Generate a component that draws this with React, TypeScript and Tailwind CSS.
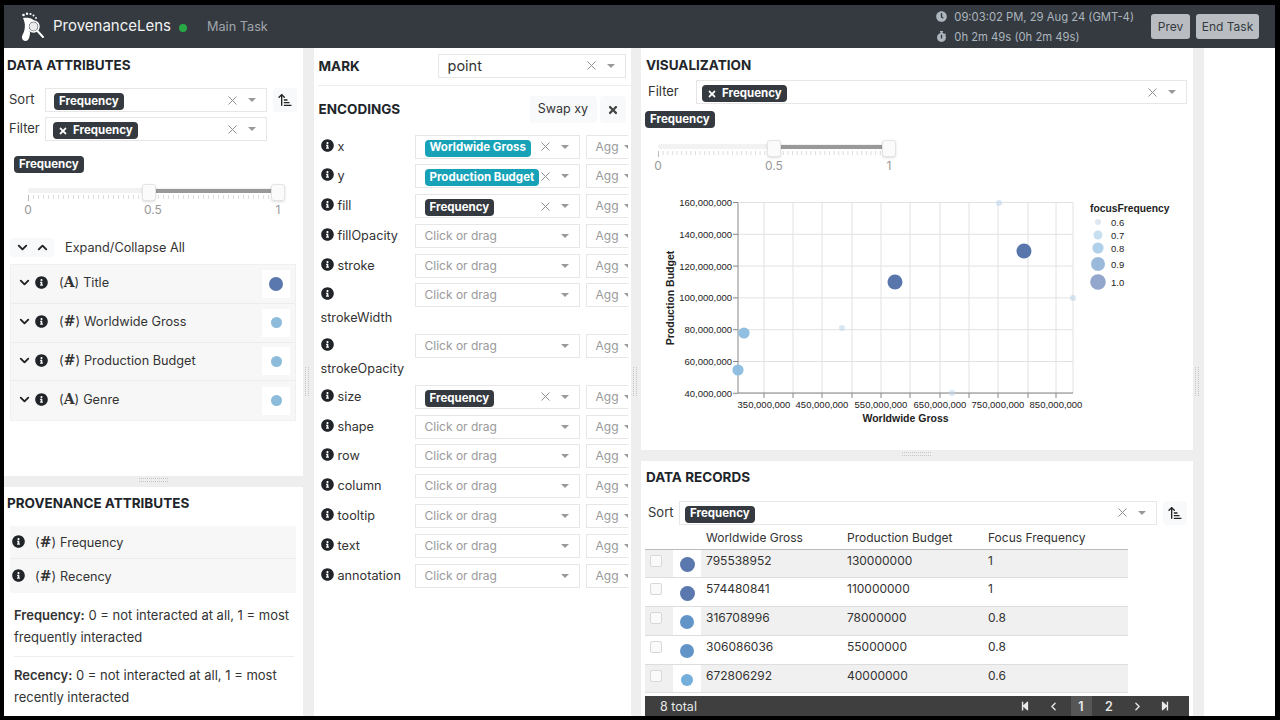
import { ArrowUpNarrowWide, ChevronDown, ChevronLeft, ChevronRight, ChevronUp, X } from "lucide-react";
import type { ReactNode } from "react";
import { FaClock, FaInfoCircle, FaStepBackward, FaStepForward, FaStopwatch, FaTimes } from "react-icons/fa";

const font = "font-['Inter','Noto_Sans',sans-serif]";

function Logo() {
  return (
    <svg width="24" height="30" viewBox="0 0 24 30" fill="white">
      <circle cx="2.5" cy="3" r="1.3" />
      <circle cx="6" cy="1.8" r="1.2" />
      <circle cx="9.5" cy="2" r="1.1" />
      <circle cx="12.5" cy="3.5" r="1" />
      <circle cx="15" cy="6" r="0.9" />
      <path d="M2 6 C6 5 12 6 13 9 C9 9 7 12 7.5 16 C7.5 18 8 19 9 20 C9 24 8 29 4.5 29 C1 29 0 25 2 22 C4 18 5 12 2 6 Z" />
      <circle cx="12.5" cy="14.5" r="5.5" fill="none" stroke="white" strokeWidth="1.5" />
      <circle cx="12.5" cy="14.5" r="4.2" fill="white" fillOpacity="0.9" />
      <path d="M16.5 19 L22 25" stroke="white" strokeWidth="2" strokeLinecap="round" />
    </svg>
  );
}

function Pill({ children, removable, teal, inBox }: { children: ReactNode; removable?: boolean; teal?: boolean; inBox?: boolean }) {
  return (
    <span
      className={`inline-flex h-[17px] items-center gap-[5px] rounded-[4px] px-[5px] text-[11.5px] leading-none font-bold whitespace-nowrap text-white ${
        teal ? "bg-[#17a2b8]" : "bg-[#343a40]"
      } ${inBox ? "mt-[3px]" : ""}`}
    >
      {removable && <FaTimes size={10} />}
      {children}
    </span>
  );
}

function Caret({ className = "" }: { className?: string }) {
  return <span className={`h-0 w-0 border-x-[4.5px] border-t-[4.5px] border-x-transparent border-t-[#999] ${className}`} />;
}

function SelectBox({
  children,
  width,
  clear = true,
  pad = "pl-[9px]",
}: {
  children: ReactNode;
  width: string;
  clear?: boolean;
  pad?: string;
}) {
  return (
    <div className={`flex h-6 shrink-0 items-center border border-[#e6e6e6] bg-white pr-[10px] ${width}`}>
      <div className={`flex min-w-0 flex-1 items-center ${pad}`}>{children}</div>
      {clear && <X size={15} strokeWidth={1.5} className="mr-[8px] shrink-0 text-[#8a8a8a]" />}
      <Caret />
    </div>
  );
}

function Slider({ low, mid, end }: { low: number; mid: number; end: number }) {
  return (
    <div className="relative h-[36px]" style={{ width: end + 10 }}>
      <div className="absolute top-[5px] left-0 h-[5px] rounded-full bg-[#f2f2f2]" style={{ width: end }} />
      <div className="absolute top-[6px] h-[4px] bg-[#999]" style={{ left: low, width: end - low }} />
      <svg className="absolute top-[11px] left-0" width={end + 2} height="8">
        {Array.from({ length: 51 }, (_, i) => {
          const x = 0.5 + (i * end) / 50;
          const major = i === 0 || i === 25 || i === 50;
          return <line key={i} x1={x} x2={x} y1="1" y2={major ? 7 : 5} stroke={major ? "#bbb" : "#ddd"} />;
        })}
      </svg>
      <span className="absolute top-[1px] h-[17px] w-[14px] -translate-x-1/2 rounded-[3px] border border-[#e4e4e4] bg-[#fbfbfb] shadow-sm" style={{ left: low }} />
      <span className="absolute top-[1px] h-[17px] w-[14px] -translate-x-1/2 rounded-[3px] border border-[#e4e4e4] bg-[#fbfbfb] shadow-sm" style={{ left: end }} />
      <span className="absolute top-[18px] -translate-x-1/2 text-[12px] text-[#999]" style={{ left: 0 }}>0</span>
      <span className="absolute top-[18px] -translate-x-1/2 text-[12px] text-[#999]" style={{ left: mid }}>0.5</span>
      <span className="absolute top-[18px] -translate-x-1/2 text-[12px] text-[#999]" style={{ left: end }}>1</span>
    </div>
  );
}

function TypeMark({ kind }: { kind: "A" | "#" }) {
  return (
    <span>
      (<span className="font-['DejaVu_Serif',serif] text-[14px] font-bold">{kind}</span>)
    </span>
  );
}

const attributes: { kind: "A" | "#"; name: string; dot: string }[] = [
  { kind: "A", name: "Title", dot: "h-[14px] w-[14px] bg-[#5b78ae]" },
  { kind: "#", name: "Worldwide Gross", dot: "h-[11px] w-[11px] bg-[#8dbbdc]" },
  { kind: "#", name: "Production Budget", dot: "h-[11px] w-[11px] bg-[#8dbbdc]" },
  { kind: "A", name: "Genre", dot: "h-[11px] w-[11px] bg-[#8dbbdc]" },
];

function DataAttributes() {
  return (
    <section className="h-[428px] shrink-0 bg-white pt-[8px]">
      <h2 className="pl-[3px] text-[13.5px] leading-[18px] font-bold text-[#212529]">DATA ATTRIBUTES</h2>
      <div className="mt-[14px] flex h-6 items-center pl-[5px] text-[13px] text-[#333]">
        <span className="w-[36px]">Sort</span>
        <SelectBox width="w-[222px]" pad="pl-[8px]">
          <Pill inBox>Frequency</Pill>
        </SelectBox>
        <span className="ml-[6px] flex h-6 w-6 items-center justify-center rounded bg-[#f8f9fa]">
          <ArrowUpNarrowWide size={16} strokeWidth={2} className="text-[#222]" />
        </span>
      </div>
      <div className="mt-[5px] flex h-6 items-center pl-[5px] text-[13px] text-[#333]">
        <span className="w-[36px]">Filter</span>
        <SelectBox width="w-[222px]" pad="pl-[7px]">
          <Pill removable inBox>Frequency</Pill>
        </SelectBox>
      </div>
      <div className="mt-[9px] pl-[10px]"><Pill>Frequency</Pill></div>
      <div className="mt-[9px] pl-[24px]"><Slider low={121} mid={125} end={250} /></div>
      <div className="mt-[19px] flex h-[19px] items-center pl-[6px]">
        <span className="flex h-[19px] w-[44px] items-center justify-center gap-[5px] rounded bg-[#f8f9fa]">
          <ChevronDown size={15} strokeWidth={3} className="text-[#222]" />
          <ChevronUp size={15} strokeWidth={3} className="text-[#222]" />
        </span>
        <span className="ml-[11px] text-[12.7px] text-[#333]">Expand/Collapse All</span>
      </div>
      <ul className="mt-[7px] ml-[6px] w-[286px] border border-[#f0f0f0] bg-[#f7f7f7]">
        {attributes.map((a) => (
          <li key={a.name} className="flex h-[38.8px] items-center border-b border-[#ececec] pr-[5px] pl-[6px] text-[12.7px] text-[#333] last:border-b-0">
            <span className="flex flex-1 items-center pb-[2px]">
              <ChevronDown size={15} strokeWidth={3} className="shrink-0 text-[#222]" />
              <FaInfoCircle size={13} className="ml-[3px] shrink-0 text-[#212529]" />
              <span className="ml-[11px] flex items-center gap-[4px]"><TypeMark kind={a.kind} /> {a.name}</span>
            </span>
            <span className="flex h-[28px] w-[28px] items-center justify-center bg-white">
              <span className={`rounded-full ${a.dot}`} />
            </span>
          </li>
        ))}
      </ul>
    </section>
  );
}

function ProvenanceAttributes() {
  return (
    <section className="flex-1 overflow-hidden bg-white pt-[7px]">
      <h2 className="pl-[3px] text-[13.5px] leading-[18px] font-bold text-[#212529]">PROVENANCE ATTRIBUTES</h2>
      <ul className="mt-[14px] ml-[6px] w-[286px] bg-[#f7f7f7] text-[12.7px] text-[#333]">
        {["Frequency", "Recency"].map((n) => (
          <li key={n} className="flex h-[33.5px] items-center border-b border-[#ececec] pl-[2px] last:border-b-0">
            <FaInfoCircle size={13} className="shrink-0 text-[#212529]" />
            <span className="ml-[10px] flex items-center gap-[4px] pt-[2px]"><TypeMark kind="#" /> {n}</span>
          </li>
        ))}
      </ul>
      <div className="mt-[11px] px-[10px] text-[13px] leading-[22.5px] text-[#333]">
        <p><b className="font-semibold">Frequency:</b> 0 = not interacted at all, 1 = most frequently interacted</p>
        <hr className="my-[7px] w-[280px] border-[#eeeeee]" />
        <p><b className="font-semibold">Recency:</b> 0 = not interacted at all, 1 = most recently interacted</p>
      </div>
    </section>
  );
}

const encodings: { name: string; pill?: string; teal?: boolean; wrap?: boolean }[] = [
  { name: "x", pill: "Worldwide Gross", teal: true },
  { name: "y", pill: "Production Budget", teal: true },
  { name: "fill", pill: "Frequency" },
  { name: "fillOpacity" },
  { name: "stroke" },
  { name: "strokeWidth", wrap: true },
  { name: "strokeOpacity", wrap: true },
  { name: "size", pill: "Frequency" },
  { name: "shape" },
  { name: "row" },
  { name: "column" },
  { name: "tooltip" },
  { name: "text" },
  { name: "annotation" },
];

function EncodingRow({ e }: { e: (typeof encodings)[number] }) {
  return (
    <div className={`flex items-start ${e.wrap ? "h-[50.7px]" : "h-[29.8px]"}`}>
      <div className="w-[94px] shrink-0 text-[12.7px] leading-[24px] text-[#333]">
        <FaInfoCircle size={13} className="mr-[4px] inline-block align-[-1px] text-[#212529]" />
        {e.wrap ? <span className="block leading-[22px]">{e.name}</span> : e.name}
      </div>
      <SelectBox width="w-[165px]" clear={!!e.pill}>
        {e.pill ? <Pill teal={e.teal} inBox>{e.pill}</Pill> : <span className="text-[12px] text-[#9a9a9a]">Click or drag</span>}
      </SelectBox>
      <div className="ml-[6px] flex h-6 w-[60px] shrink-0 items-center border border-[#e6e6e6] pl-[9px] text-[12px] text-[#9a9a9a]">
        Agg
        <Caret className="ml-[5px]" />
      </div>
    </div>
  );
}

function EncodingPanel() {
  return (
    <section className="h-full overflow-hidden bg-white pt-[4px] pl-[4px]">
      <div className="flex h-[34px] items-center border-b border-[#eeeeee] pb-[6px]">
        <h2 className="mt-[2px] w-[120px] pl-[1px] text-[13.5px] font-bold text-[#212529]">MARK</h2>
        <SelectBox width="w-[188px]">
          <span className="text-[14.5px] text-[#333]">point</span>
        </SelectBox>
      </div>
      <div className="mt-[10px] flex h-[27px] items-center">
        <h2 className="flex-1 pl-[1px] text-[13.5px] font-bold text-[#212529]">ENCODINGS</h2>
        <span className="flex h-[27px] w-[67px] items-center justify-center rounded bg-[#f8f9fa] text-[12.5px] text-[#333]">Swap xy</span>
        <span className="mr-[5px] ml-[3px] flex h-[27px] w-[26px] items-center justify-center rounded bg-[#f8f9fa] text-[#444]">
          <FaTimes size={12} />
        </span>
      </div>
      <div className="mt-[11.5px] w-[310px] overflow-hidden pl-[3px]">
        {encodings.map((e) => (
          <EncodingRow key={e.name} e={e} />
        ))}
      </div>
    </section>
  );
}

const xTicks = [
  [764, "350,000,000"], [793], [822, "450,000,000"], [852], [881, "550,000,000"], [910],
  [940, "650,000,000"], [969], [998, "750,000,000"], [1028], [1056, "850,000,000"],
] as [number, string?][];
const yTicks = [
  [202.5, "160,000,000"], [234.3, "140,000,000"], [266.1, "120,000,000"], [297.9, "100,000,000"],
  [329.7, "80,000,000"], [361.5, "60,000,000"], [393.3, "40,000,000"],
] as [number, string][];
const points = [
  [999, 203, 3, "#b9d3ea", 0.55], [1024, 251, 7.5, "#4f6fa8", 0.95], [895, 282, 7.5, "#4f6fa8", 0.95],
  [1073, 298, 3, "#b9d3ea", 0.55], [842, 328, 3, "#b9d3ea", 0.55], [744, 333, 5.6, "#8abcdf", 0.95],
  [738, 370, 5.6, "#8abcdf", 0.95], [952, 393, 3, "#b9d3ea", 0.55],
] as [number, number, number, string, number][];
const legend = [
  [222, 3, "#dfe8f2", "0.6"], [235, 4.5, "#c8dff0", "0.7"], [248, 5.6, "#aed0ea", "0.8"], [264, 7, "#9bbadb", "0.9"], [282, 7.8, "#93a6cb", "1.0"],
] as [number, number, string, string][];

function Chart() {
  return (
    <svg width="552" height="250" viewBox="641 190 552 250" className="block font-['Liberation_Sans',sans-serif]">
      {yTicks.map(([y, label]) => (
        <g key={label}>
          <line x1="738" x2="1073" y1={y} y2={y} stroke="#e2e2e2" />
          <line x1="733" x2="738" y1={y} y2={y} stroke="#888" />
          <text x="732" y={y + 3.5} textAnchor="end" fontSize="9.5" fill="#222">{label}</text>
        </g>
      ))}
      {xTicks.map(([x, label]) => (
        <g key={x}>
          <line x1={x} x2={x} y1="203" y2="393" stroke="#e2e2e2" />
          <line x1={x} x2={x} y1="393" y2="398" stroke="#888" />
          {label && <text x={x} y="408" textAnchor="middle" fontSize="9.5" fill="#222">{label}</text>}
        </g>
      ))}
      <line x1="1073" x2="1073" y1="203" y2="393" stroke="#e2e2e2" />
      <line x1="738" x2="738" y1="203" y2="393" stroke="#888" />
      <line x1="738" x2="1073" y1="393" y2="393" stroke="#888" />
      {points.map(([x, y, r, fill, op]) => (
        <circle key={x} cx={x} cy={y} r={r} fill={fill} fillOpacity={op} />
      ))}
      <text x="905.5" y="422" textAnchor="middle" fontSize="10.5" fontWeight="700" fill="#222">Worldwide Gross</text>
      <text transform="translate(674 298) rotate(-90)" textAnchor="middle" fontSize="10.5" fontWeight="700" fill="#222">Production Budget</text>
      <text x="1090" y="212" fontSize="10.3" fontWeight="700" fill="#222">focusFrequency</text>
      {legend.map(([y, r, fill, label]) => (
        <g key={label}>
          <circle cx="1098" cy={y} r={r} fill={fill} />
          <text x="1111" y={y + 3.5} fontSize="9.5" fill="#222">{label}</text>
        </g>
      ))}
    </svg>
  );
}

function Visualization() {
  return (
    <section className="h-[402px] shrink-0 overflow-hidden bg-white pt-[8px]">
      <h2 className="pl-[5px] text-[13.5px] leading-[18px] font-bold text-[#212529]">VISUALIZATION</h2>
      <div className="mt-[6px] flex h-6 items-center pl-[7px] text-[13px] text-[#333]">
        <span className="w-[48px]">Filter</span>
        <SelectBox width="w-[491px]" pad="pl-[5px]">
          <Pill removable inBox>Frequency</Pill>
        </SelectBox>
      </div>
      <div className="mt-[1px] pl-[4px]"><Pill>Frequency</Pill></div>
      <div className="mt-[10px] pl-[17px]"><Slider low={116} mid={116} end={231} /></div>
      <div className="mt-[15px]"><Chart /></div>
    </section>
  );
}

const rows = [
  { g: "795538952", b: "130000000", f: "1", dot: "h-[15px] w-[15px] bg-[#5b78ae]" },
  { g: "574480841", b: "110000000", f: "1", dot: "h-[15px] w-[15px] bg-[#5b78ae]" },
  { g: "316708996", b: "78000000", f: "0.8", dot: "h-[14px] w-[14px] bg-[#6394c8]" },
  { g: "306086036", b: "55000000", f: "0.8", dot: "h-[14px] w-[14px] bg-[#6394c8]" },
  { g: "672806292", b: "40000000", f: "0.6", dot: "h-[12px] w-[12px] bg-[#74aedb]" },
];

function DataRecords() {
  return (
    <section className="flex flex-1 flex-col overflow-hidden bg-white pt-[7px]">
      <h2 className="pl-[5px] text-[13.5px] leading-[18px] font-bold text-[#212529]">DATA RECORDS</h2>
      <div className="mt-[15px] flex h-6 items-center pl-[7px] text-[13px] text-[#333]">
        <span className="w-[31px]">Sort</span>
        <SelectBox width="w-[478px]" pad="pl-[5px]">
          <Pill inBox>Frequency</Pill>
        </SelectBox>
        <span className="ml-[6px] flex h-6 w-6 items-center justify-center rounded bg-[#f8f9fa]">
          <ArrowUpNarrowWide size={16} strokeWidth={2} className="text-[#222]" />
        </span>
      </div>
      <div className="mt-[4px] ml-[4px] w-[483px] text-[12px] text-[#333]">
        <div className="flex h-[21px] items-center border-b border-[#bbbbbb] pb-[2px] pl-[61px]">
          <span className="w-[141px]">Worldwide Gross</span>
          <span className="w-[141px]">Production Budget</span>
          <span>Focus Frequency</span>
        </div>
        {rows.map((r, i) => (
          <div key={r.g} className={`flex h-[28.8px] border-b border-[#dddddd] ${i % 2 === 0 ? "bg-[#f0f0f0]" : "bg-white"}`}>
            <span className="flex w-[28px] items-start pt-[5px] pl-[5px]">
              <span className="h-[12px] w-[12px] rounded-[2px] border border-[#d8d8d8] bg-[#fafafa]" />
            </span>
            <span className="flex w-[28px] items-center justify-center bg-white pt-[2px]">
              <span className={`rounded-full ${r.dot}`} />
            </span>
            <span className="w-[141px] pt-[2px] pl-[5px]">{r.g}</span>
            <span className="w-[141px] pt-[2px] pl-[5px]">{r.b}</span>
            <span className="pt-[2px] pl-[5px]">{r.f}</span>
          </div>
        ))}
      </div>
      <div className="mt-auto ml-[4px] flex h-[20px] w-[544px] shrink-0 items-center bg-[#3f3f3f] pr-[10px] pl-[15px] text-[12.5px] text-[#e8e8e8]">
        <span className="flex-1 pt-[3px]">8 total</span>
        <span className="flex w-[28px] justify-center"><FaStepBackward size={10} /></span>
        <span className="flex w-[28px] justify-center"><ChevronLeft size={13} strokeWidth={2.5} /></span>
        <span className="flex h-[20px] w-[28px] items-center justify-center">
          <span className="flex h-[20px] w-[21px] items-center justify-center bg-[#565656] pt-[3px] font-semibold">1</span>
        </span>
        <span className="flex w-[28px] justify-center pt-[3px] font-semibold">2</span>
        <span className="flex w-[28px] justify-center"><ChevronRight size={13} strokeWidth={2.5} /></span>
        <span className="flex w-[28px] justify-center"><FaStepForward size={10} /></span>
      </div>
    </section>
  );
}

function Gutter({ vertical }: { vertical?: boolean }) {
  const dots = (
    <svg width={vertical ? 6 : 30} height={vertical ? 30 : 6}>
      {Array.from({ length: 30 }, (_, i) => (
        <rect
          key={i}
          x={vertical ? (i % 2) * 3 : Math.floor(i / 2) * 2}
          y={vertical ? Math.floor(i / 2) * 2 : (i % 2) * 3}
          width="1"
          height="1"
          fill="#c4c4c4"
        />
      ))}
    </svg>
  );
  return (
    <div className={`flex shrink-0 items-center justify-center bg-[#eeeeee] ${vertical ? "w-[10.5px]" : "h-[10.5px]"}`}>
      {dots}
    </div>
  );
}

export default function App() {
  return (
    <div className={`flex h-[720px] w-[1280px] flex-col overflow-hidden bg-black pt-[5px] pr-[5px] pb-[4px] pl-[4px] ${font}`}>
      <header className="flex h-[43px] shrink-0 items-center bg-[#343a40] pr-[16px]">
        <span className="ml-[17px]"><Logo /></span>
        <span className="ml-[8px] text-[15px] text-[#f2f2f2]">ProvenanceLens</span>
        <span className="mt-[3px] ml-[8px] h-2 w-2 rounded-full bg-[#28a745]" />
        <span className="ml-[20px] text-[12.7px] text-[#a1a6ab]">Main Task</span>
        <div className="ml-auto flex flex-col gap-[4px] text-[11.25px] leading-[16px] text-[#adb5bd]">
          <span className="flex items-center gap-[7px]"><FaClock size={11} />09:03:02 PM, 29 Aug 24 (GMT-4)</span>
          <span className="flex items-center gap-[7px]"><FaStopwatch size={11} />0h 2m 49s (0h 2m 49s)</span>
        </div>
        <button className="ml-[17px] h-[25px] w-[39px] rounded-[3px] bg-[#b9bdc1] text-[12px] text-[#343a40]">Prev</button>
        <button className="ml-[6px] h-[25px] w-[63px] rounded-[3px] bg-[#b9bdc1] text-[12px] text-[#343a40]">End Task</button>
      </header>
      <main className="flex min-h-0 flex-1">
        <div className="flex w-[299px] shrink-0 flex-col">
          <DataAttributes />
          <Gutter />
          <ProvenanceAttributes />
        </div>
        <Gutter vertical />
        <div className="w-[317px] shrink-0"><EncodingPanel /></div>
        <Gutter vertical />
        <div className="flex w-[552px] shrink-0 flex-col">
          <Visualization />
          <Gutter />
          <DataRecords />
        </div>
        <Gutter vertical />
        <div className="flex-1 bg-white" />
      </main>
    </div>
  );
}
